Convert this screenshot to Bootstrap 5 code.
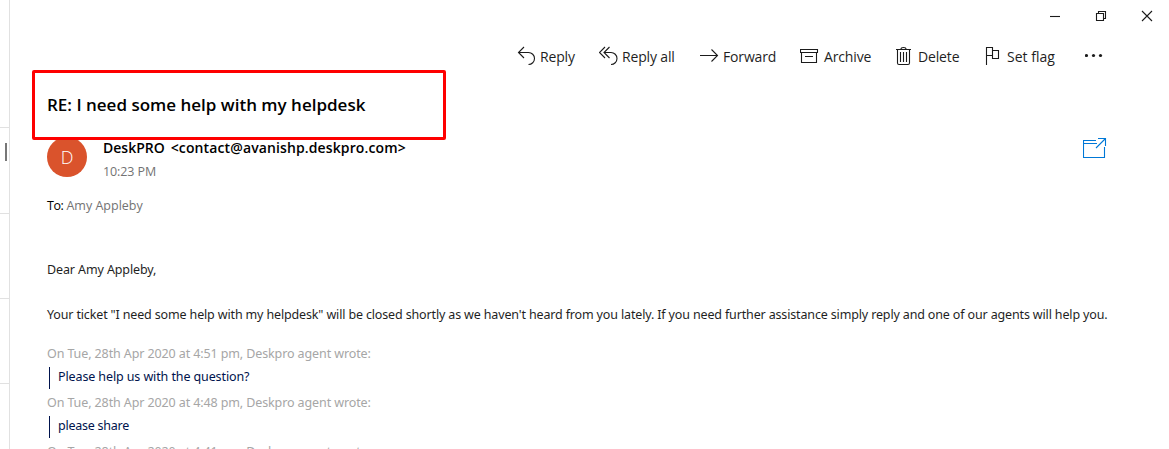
<!DOCTYPE html>
<html lang="en">
<head>
<meta charset="utf-8">
<title>Mail</title>
<link href="https://cdn.jsdelivr.net/npm/bootstrap@5.3.0/dist/css/bootstrap.min.css" rel="stylesheet">
<style>
body{font-family:"Open Sans","Noto Sans",sans-serif;font-size:13px;color:#1f1f1f;background:#fff}
.window{height:449px}
svg{fill:none;stroke:#1b1b1b;stroke-width:1.1;flex:none;display:block}
.message-list{width:10px;border-right:1px solid #e1e1e1;padding-top:43px}
.list-item{height:85.3px;border-bottom:1px solid #e1e1e1;flex:none}
.list-item.selected{padding:15px 0 0 5px}
.thumb{width:2px;height:18px;background:#777}
.reader{padding-left:37px;min-width:0}
.win-controls{height:32px;margin-right:-1px}
.tools{display:grid;grid-template-columns:82px 100px 101px 95px 90px 100px 30px;height:24px;margin:12px 0 0 470px;font-size:14px;line-height:25px;letter-spacing:-.15px}
.btn-tool svg{margin-right:-1px}
.btn-flag{letter-spacing:0}
.dots{fill:#1b1b1b;stroke:none}
.subject{width:414px;height:70px;margin:2px 0 0 -15px;padding:0 0 0 12px;border:3px solid #fe0000;border-radius:2px;font-size:17px;font-weight:600;color:#000;z-index:1}
.avatar{width:40px;height:40px;background:#da532c;color:#fff;font-size:18px;font-weight:300;margin-top:-3px}
.details{margin-top:-4px}
.sender{font-size:14px;font-weight:600;color:#000;line-height:24px}
.address{padding-left:2px;letter-spacing:.12px}
.sent{font-size:12.5px;line-height:23px;letter-spacing:-.1px}
.gray{color:#737373}
.popout{stroke:#0078d7;margin:-2px 62px 0 0}
.recipient{height:20px;line-height:20px;margin-top:13px;font-size:12.5px}
.recipient .to{letter-spacing:-.5px}
.letter{font-family:"Noto Sans","Open Sans",sans-serif;font-size:12.5px;letter-spacing:-.11px;line-height:20px;white-space:nowrap;padding-top:44px}
.letter p{margin-bottom:25px}
.letter .notice{letter-spacing:-.148px;margin-bottom:15px}
.quote-head{height:27px;line-height:28px;color:#a6a6a6}
.quote{height:22px;line-height:20px;border-left:1px solid #00134d;margin-left:2px;padding-left:8px;color:#00134d}
.quote.short{letter-spacing:-.25px}
</style>
</head>
<body>
<div class="window d-flex overflow-hidden">
  <aside class="message-list d-flex flex-column flex-shrink-0">
    <div class="list-item"></div><div class="list-item selected"><div class="thumb"></div></div><div class="list-item"></div><div class="list-item"></div>
  </aside>
  <main class="reader flex-grow-1">
    <div class="win-controls d-flex justify-content-end">
      <svg width="46" height="32"><path d="M18 16.5h10"/></svg>
      <svg width="46" height="32"><path d="M18.500 13.500h7v7h-7zM20.500 13.500v-2h7v7h-2"/></svg>
      <svg width="46" height="32"><path d="M18 11l10 10M28 11l-10 10"/></svg>
    </div>
    <nav class="tools">
      <div class="btn-tool d-flex"><svg width="24" height="24"><path d="M7 3L1.500 8.500 7 14M1.500 8.500h10a6 6 0 0 1 0 12"/></svg><span>Reply</span></div>
      <div class="btn-tool d-flex"><svg width="24" height="24"><path d="M6 3L.5 8.500 6 14M10.500 3L5 8.500l5.500 5.500M5 8.500h7a6 6 0 0 1 0 12"/></svg><span>Reply all</span></div>
      <div class="btn-tool d-flex"><svg width="25" height="24"><path d="M1 11.500h17.500M12.500 5.500l6 6-6 6"/></svg><span>Forward</span></div>
      <div class="btn-tool d-flex"><svg width="25" height="24"><path d="M.5 5.500h17v3h-17zM1.500 8.500v10h15v-10M5 12.500h8"/></svg><span>Archive</span></div>
      <div class="btn-tool d-flex"><svg width="24" height="24"><path d="M1 5.500h15M2.500 5.500v13.500q0 1.500 1.500 1.500h9q1.500 0 1.500-1.500V5.500M6 5q0-1.500 2.500-1.500T11 5M5.500 8v10M8.500 8v10M11.500 8v10"/></svg><span>Delete</span></div>
      <div class="btn-tool btn-flag d-flex"><svg width="23" height="24"><path d="M1.500 21V3.500h6v8h-6M7.500 6.500h6v8h-6z"/></svg><span>Set flag</span></div>
      <svg class="dots" width="24" height="24"><circle cx="1.500" cy="11.500" r="1.600"/><circle cx="8.500" cy="11.500" r="1.600"/><circle cx="15.500" cy="11.500" r="1.600"/></svg>
    </nav>
    <header class="subject position-relative d-flex align-items-center">RE: I need some help with my helpdesk</header>
    <section class="d-flex">
      <div class="avatar rounded-circle d-flex align-items-center justify-content-center">D</div>
      <div class="details ms-3 flex-grow-1">
        <div class="sender d-flex"><span class="me-1">DeskPRO</span><span class="address">&lt;contact@avanishp.deskpro.com&gt;</span></div>
        <div class="sent gray">10:23 PM</div>
      </div>
      <svg class="popout" width="24" height="24"><path d="M13 2.500H.5v17h21V9M.5 5.500H14M15 .5h7.500V8M13 10L22.500.5"/></svg>
    </section>
    <div class="recipient"><span class="to text-black">To:</span> <span class="gray">Amy Appleby</span></div>
    <article class="letter">
      <p>Dear Amy Appleby,</p>
      <p class="notice">Your ticket "I need some help with my helpdesk" will be closed shortly as we haven't heard from you lately. If you need further assistance simply reply and one of our agents will help you.</p>
      <div class="quote-head">On Tue, 28th Apr 2020 at 4:51 pm, Deskpro agent wrote:</div>
      <div class="quote">Please help us with the question?</div>
      <div class="quote-head">On Tue, 28th Apr 2020 at 4:48 pm, Deskpro agent wrote:</div>
      <div class="quote short">please share</div>
      <div class="quote-head">On Tue, 28th Apr 2020 at 4:41 pm, Deskpro agent wrote:</div>
    </article>
  </main>
</div>
<script src="https://cdn.jsdelivr.net/npm/bootstrap@5.3.0/dist/js/bootstrap.bundle.min.js"></script>
</body>
</html>
